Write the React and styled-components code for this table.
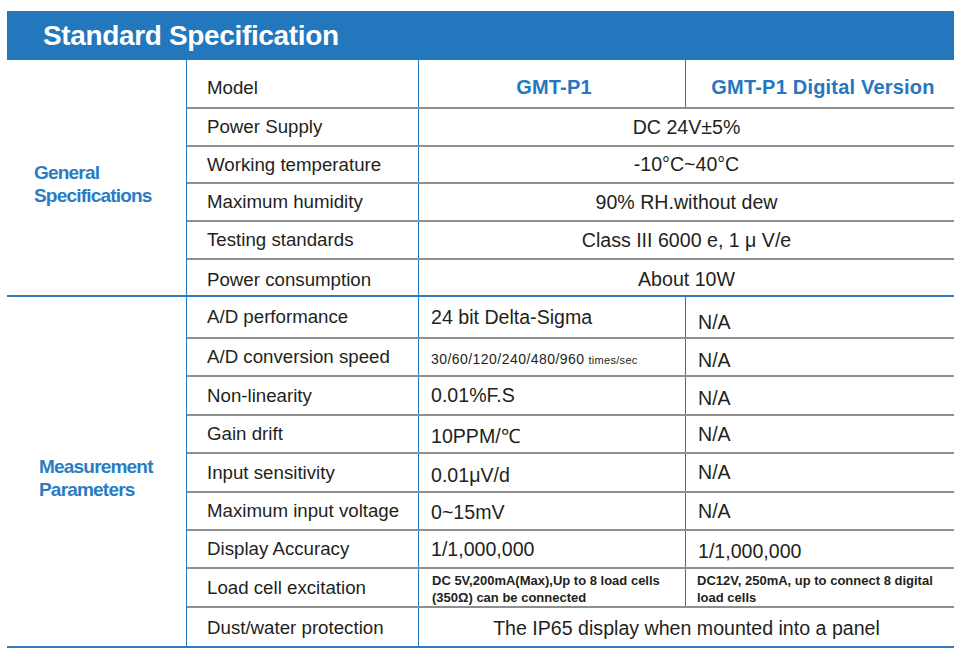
import React from 'react';
import styled, { createGlobalStyle } from 'styled-components';

const BLUE = '#2277bd';
const LINE_BLUE = '#2f7cc4';
const LINE_GRAY = '#8f8f8f';
const INK = '#231f20';

const GlobalStyle = createGlobalStyle`
  html, body {
    margin: 0;
    padding: 0;
    background: #ffffff;
  }
  body {
    font-family: "Liberation Sans", Arial, sans-serif;
    color: ${INK};
  }
`;

const Page = styled.div`
  width: 947px;
  padding: 11px 0 0 7px;
`;

const TitleBar = styled.header`
  height: 49px;
  background: ${BLUE};
  display: flex;
  align-items: center;
  padding-left: 36px;
`;

const Title = styled.h1`
  margin: 0;
  font-size: 28px;
  font-weight: 700;
  letter-spacing: -0.35px;
  color: #ffffff;
`;

const Section = styled.section`
  display: flex;
  border-bottom: 2px solid ${LINE_BLUE};
`;

const SectionTitle = styled.div`
  width: 180px;
  flex: none;
  box-sizing: border-box;
  border-right: 1px solid ${BLUE};
  display: flex;
  align-items: center;
  padding-left: ${p => p.$indent}px;
  padding-top: 13px;
  font-size: 19px;
  font-weight: 700;
  letter-spacing: -0.8px;
  line-height: 23px;
  color: #2a7cc2;
`;

const Rows = styled.div`
  flex: 1;
  display: flex;
  flex-direction: column;
`;

const Row = styled.div`
  display: grid;
  grid-template-columns: ${p => (p.$split ? '232px 267px 1fr' : '232px 1fr')};
  height: ${p => p.$h}px;
  box-sizing: border-box;
  border-bottom: 2px solid ${LINE_GRAY};

  &:last-child {
    border-bottom: none;
  }
`;

const Label = styled.div`
  box-sizing: border-box;
  border-right: 1px solid ${BLUE};
  display: flex;
  align-items: center;
  padding-left: 20px;
  padding-top: ${p => p.$pt || 0}px;
  font-size: 18.7px;
`;

const Head = styled.div`
  box-sizing: border-box;
  border-right: ${p => (p.$last ? 'none' : `1px solid ${BLUE}`)};
  display: flex;
  align-items: center;
  justify-content: center;
  padding-top: 8px;
  padding-left: ${p => (p.$last ? 6 : 4)}px;
  font-size: 20px;
  font-weight: 700;
  letter-spacing: 0.2px;
  color: #2577bf;
`;

const Merged = styled.div`
  display: flex;
  align-items: center;
  justify-content: center;
  padding-top: ${p => p.$pt || 0}px;
  font-size: 19.6px;
`;

const Value = styled.div`
  box-sizing: border-box;
  border-right: ${p => (p.$last ? 'none' : `1px solid ${BLUE}`)};
  display: flex;
  align-items: center;
  padding-left: 12px;
  padding-top: ${p => p.$pt || 0}px;
  font-size: 19.6px;
`;

const Rates = styled.span`
  font-size: 14px;
  letter-spacing: 0.45px;
`;

const Unit = styled.span`
  font-size: 11px;
  letter-spacing: 0.3px;
  margin-left: 4px;
`;

const Note = styled.div`
  box-sizing: border-box;
  border-right: ${p => (p.$last ? 'none' : `1px solid ${BLUE}`)};
  display: flex;
  align-items: center;
  padding: 2px 8px 0 ${p => (p.$last ? 11 : 13)}px;
  font-family: "Liberation Sans Narrow", "Liberation Sans", Arial, sans-serif;
  font-stretch: condensed;
  font-size: 13px;
  font-weight: 700;
  line-height: 17px;
`;

const general = [
  { label: 'Power Supply', value: 'DC 24V±5%', h: 38 },
  { label: 'Working temperature', value: '-10°C~40°C', h: 37 },
  { label: 'Maximum humidity', value: '90% RH.without dew', h: 38 },
  { label: 'Testing standards', value: 'Class III 6000 e, 1 μ V/e', h: 38 },
  { label: 'Power consumption', value: 'About 10W', h: 35, pt: 4 },
];

const measurement = [
  { label: 'A/D performance', a: '24 bit Delta-Sigma', b: 'N/A', h: 42, pb: 10 },
  { label: 'A/D conversion speed', a: 'rates', b: 'N/A', h: 38, pb: 6 },
  { label: 'Non-linearity', a: '0.01%F.S', b: 'N/A', h: 39, pb: 6 },
  { label: 'Gain drift', a: '10PPM/℃', b: 'N/A', h: 38, pa: 2 },
  { label: 'Input sensitivity', a: '0.01μV/d', b: 'N/A', h: 39, pa: 6 },
  { label: 'Maximum input voltage', a: '0~15mV', b: 'N/A', h: 38, pa: 2 },
  { label: 'Display Accuracy', a: '1/1,000,000', b: '1/1,000,000', h: 38, pb: 4 },
];

const App = () => (
  <Page>
    <GlobalStyle />
    <TitleBar>
      <Title>Standard Specification</Title>
    </TitleBar>

    <Section>
      <SectionTitle $indent={27}>
        General
        <br />
        Specifications
      </SectionTitle>
      <Rows>
        <Row $split $h={49}>
          <Label $pt={8}>Model</Label>
          <Head>GMT-P1</Head>
          <Head $last>GMT-P1 Digital Version</Head>
        </Row>
        {general.map(r => (
          <Row key={r.label} $h={r.h}>
            <Label $pt={r.pt}>{r.label}</Label>
            <Merged $pt={r.pt}>{r.value}</Merged>
          </Row>
        ))}
      </Rows>
    </Section>

    <Section>
      <SectionTitle $indent={32}>
        Measurement
        <br />
        Parameters
      </SectionTitle>
      <Rows>
        {measurement.map(r => (
          <Row key={r.label} $split $h={r.h}>
            <Label>{r.label}</Label>
            <Value $pt={r.pa}>
              {r.a === 'rates' ? (
                <span>
                  <Rates>30/60/120/240/480/960</Rates>
                  <Unit>times/sec</Unit>
                </span>
              ) : (
                r.a
              )}
            </Value>
            <Value $last $pt={r.pb}>{r.b}</Value>
          </Row>
        ))}
        <Row $split $h={39}>
          <Label>Load cell excitation</Label>
          <Note>DC 5V,200mA(Max),Up to 8 load cells (350Ω) can be connected</Note>
          <Note $last>DC12V, 250mA, up to connect 8 digital load cells</Note>
        </Row>
        <Row $h={38}>
          <Label $pt={2}>Dust/water protection</Label>
          <Merged $pt={2}>The IP65 display when mounted into a panel</Merged>
        </Row>
      </Rows>
    </Section>
  </Page>
);

export default App;
